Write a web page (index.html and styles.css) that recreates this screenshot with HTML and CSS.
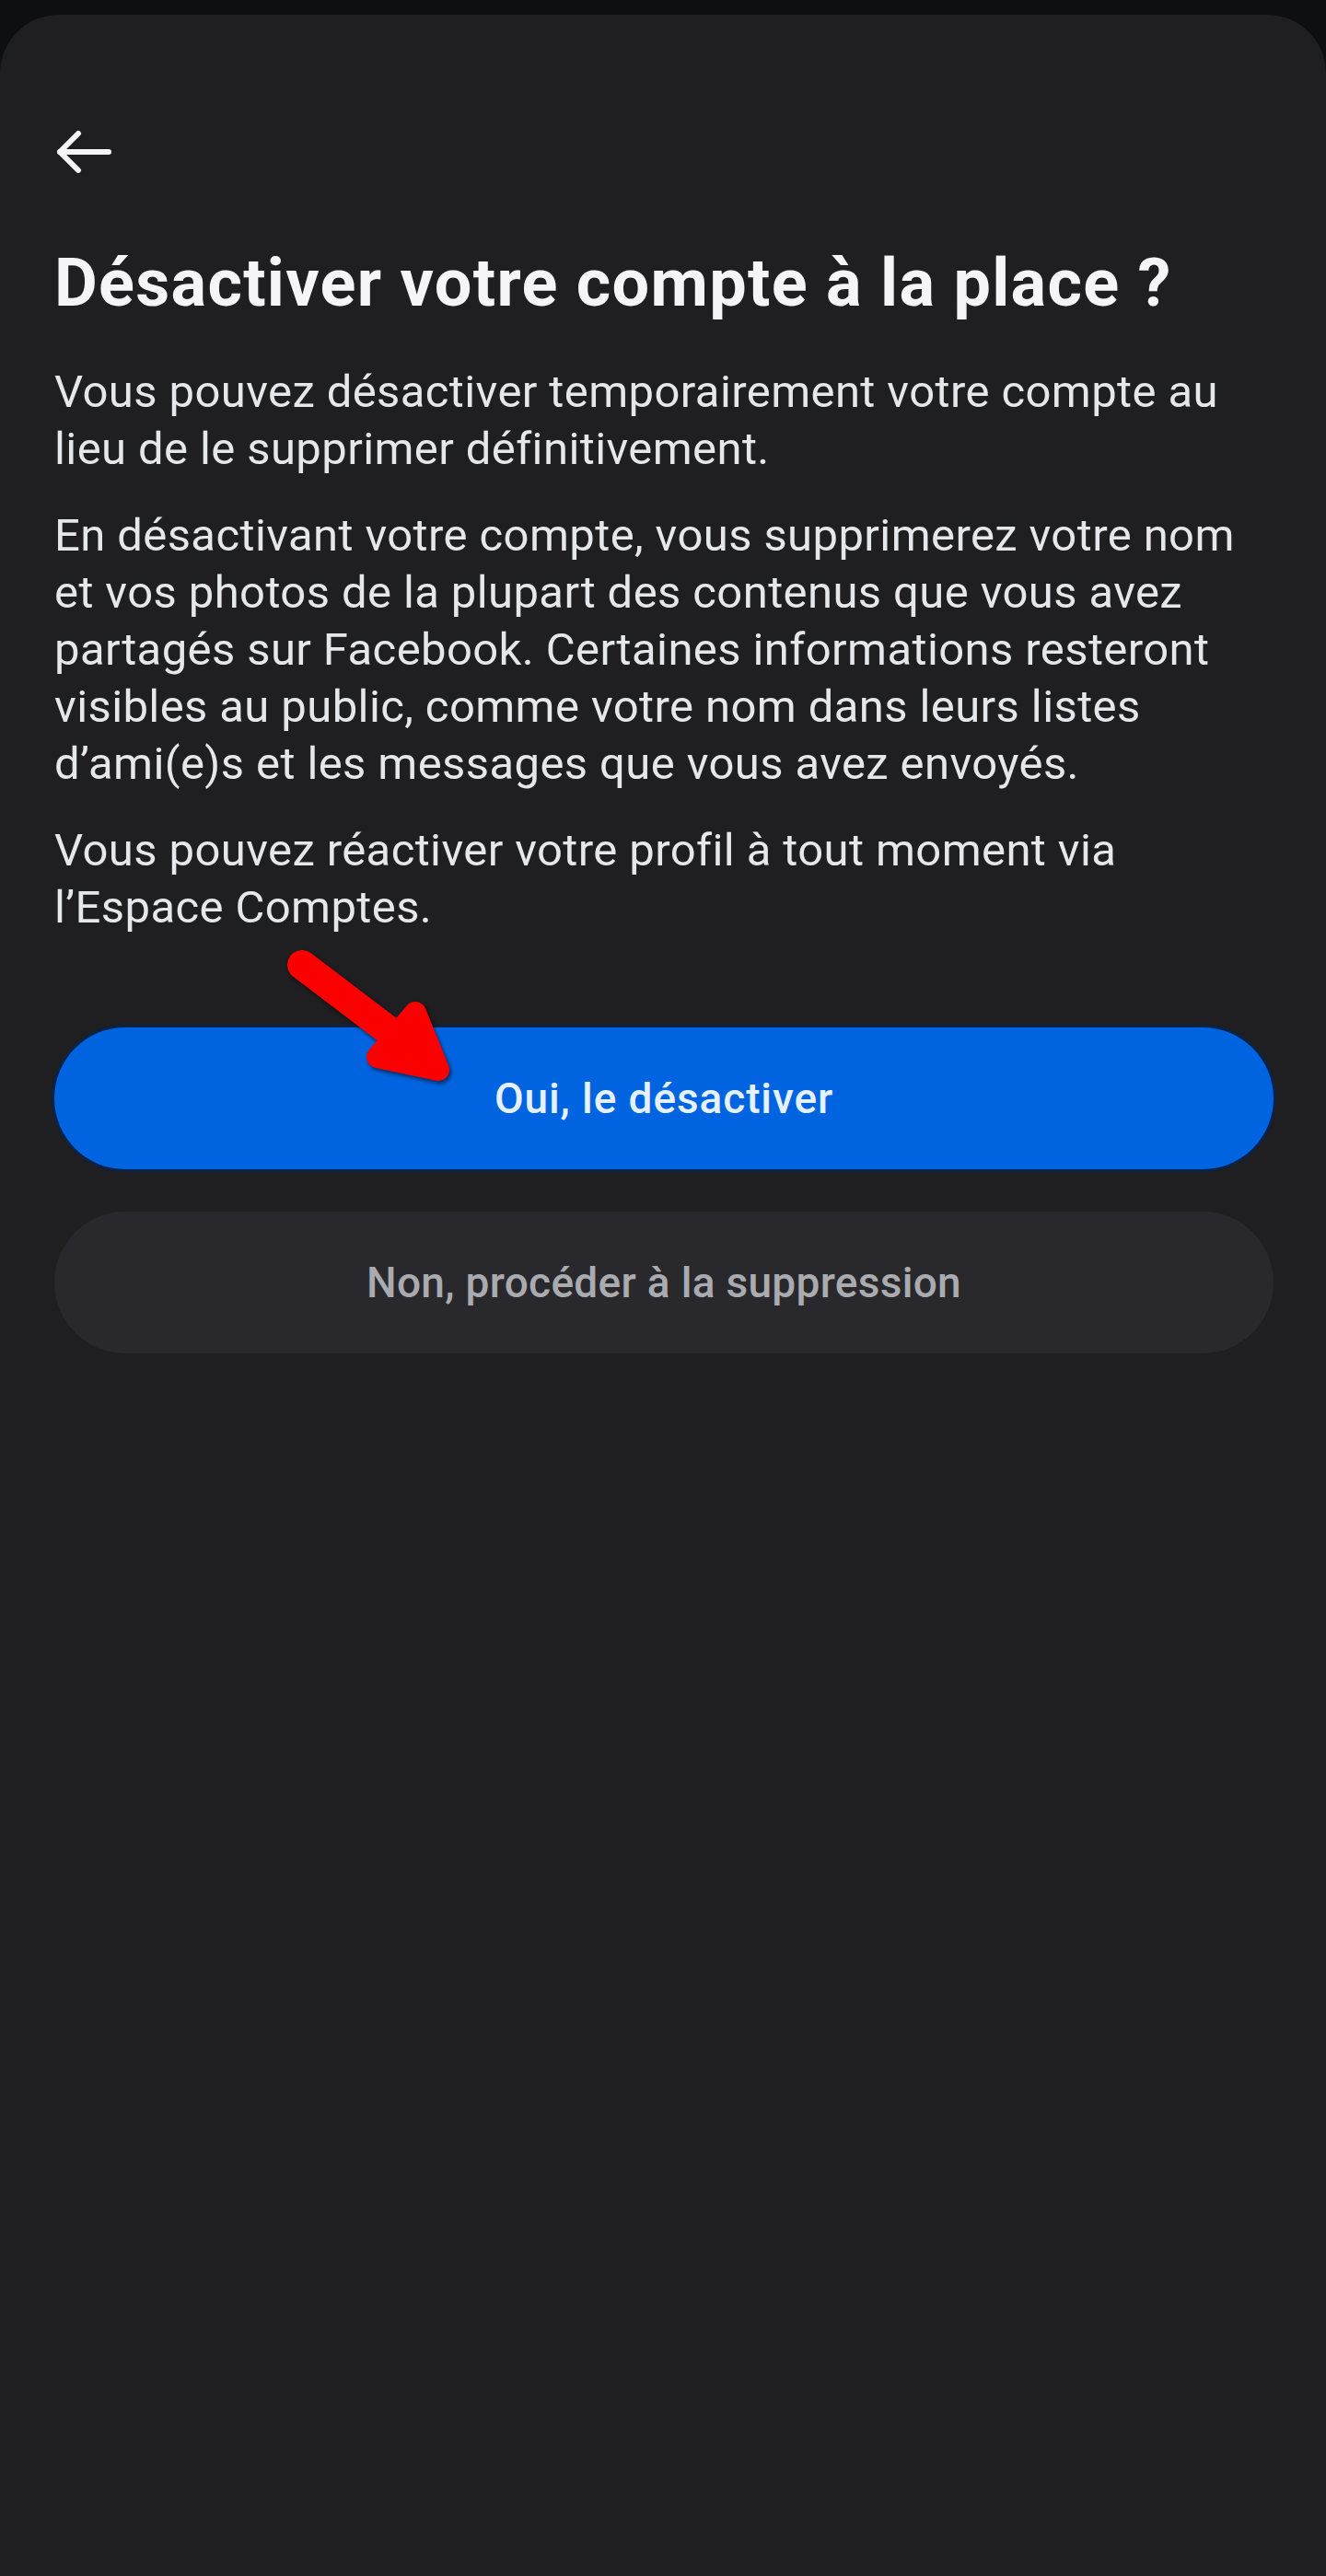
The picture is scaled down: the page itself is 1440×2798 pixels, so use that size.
FILE: index.html
```html
<!DOCTYPE html>
<html lang="fr">
<head>
<meta charset="utf-8">
<title>Désactiver votre compte</title>
<link rel="stylesheet" href="styles.css">
</head>
<body>
<div class="page">
  <div class="sheet">
    <button class="back" aria-label="Retour">
      <svg width="62" height="46" viewBox="0 0 62 46" fill="none" stroke="#f5f5f7" stroke-width="6" stroke-linecap="round" stroke-linejoin="round">
        <path d="M4 23 H57"/>
        <path d="M24 3 L4 23 L24 43"/>
      </svg>
    </button>
    <h1 class="title">Désactiver votre compte à la place ?</h1>
    <p class="text">Vous pouvez désactiver temporairement votre compte au<br>lieu de le supprimer définitivement.</p>
    <p class="text">En désactivant votre compte, vous supprimerez votre nom<br>et vos photos de la plupart des contenus que vous avez<br>partagés sur Facebook. Certaines informations resteront<br>visibles au public, comme votre nom dans leurs listes<br>d’ami(e)s et les messages que vous avez envoyés.</p>
    <p class="text">Vous pouvez réactiver votre profil à tout moment via<br>l’Espace Comptes.</p>
    <div class="actions">
      <button class="btn btn-primary">Oui, le désactiver</button>
      <button class="btn btn-secondary">Non, procéder à la suppression</button>
    </div>
  </div>
  <svg class="annot" width="220" height="180" viewBox="300 1010 220 180">
    <g fill="#fb0000" stroke="#fb0000" stroke-linecap="round" stroke-linejoin="round">
      <path d="M328 1048 L428 1124" stroke-width="32" fill="none"/>
      <polygon points="451,1100 410,1148 476,1162" stroke-width="24"/>
    </g>
  </svg>
</div>
</body>
</html>
```
FILE: styles.css
```css
html, body {
  margin: 0;
  padding: 0;
  background: #0e0f11;
}
body {
  font-family: Roboto, "Noto Sans", "Liberation Sans", sans-serif;
  color: #e9eaee;
}
.page {
  position: relative;
  width: 1440px;
  min-height: 2798px;
  padding-top: 16px;
  box-sizing: border-box;
}
.sheet {
  background: #1f1f22;
  border-radius: 64px 64px 0 0;
  min-height: 2782px;
  padding: 126px 57px 0 59px;
  box-sizing: border-box;
}
.back {
  display: block;
  background: none;
  border: 0;
  padding: 0;
  margin: 0 0 0 2px;
  width: 62px;
  height: 46px;
  cursor: pointer;
}
.back svg {
  display: block;
}
.title {
  margin: 77px 0 0 0;
  font-size: 72px;
  line-height: 86px;
  font-weight: 700;
  color: #f5f5f7;
  white-space: nowrap;
  letter-spacing: 1.3px;
}
.text {
  margin: 44px 0 0 0;
  font-size: 49px;
  line-height: 62px;
  font-weight: 400;
  color: #e6e7eb;
  white-space: nowrap;
  letter-spacing: 0.4px;
}
.text + .text {
  margin-top: 32px;
}
.actions {
  display: flex;
  flex-direction: column;
  gap: 46px;
  margin-top: 99px;
}
.btn {
  display: flex;
  align-items: center;
  justify-content: center;
  width: 100%;
  height: 154px;
  border: 0;
  border-radius: 77px;
  font-family: Roboto, "Noto Sans", "Liberation Sans", sans-serif;
  font-size: 46px;
  font-weight: 500;
  padding: 0;
  cursor: pointer;
}
.btn-primary {
  background: #0064e0;
  color: #e6f1ff;
  box-shadow: 0 0 0 3px #072347;
  letter-spacing: 0.9px;
}
.btn-secondary {
  background: #29292d;
  color: #a9abaf;
  letter-spacing: 0.3px;
}
.annot {
  position: absolute;
  left: 300px;
  top: 1010px;
  pointer-events: none;
  filter: drop-shadow(2px 3px 2px rgba(0, 0, 0, 0.55));
}
```
